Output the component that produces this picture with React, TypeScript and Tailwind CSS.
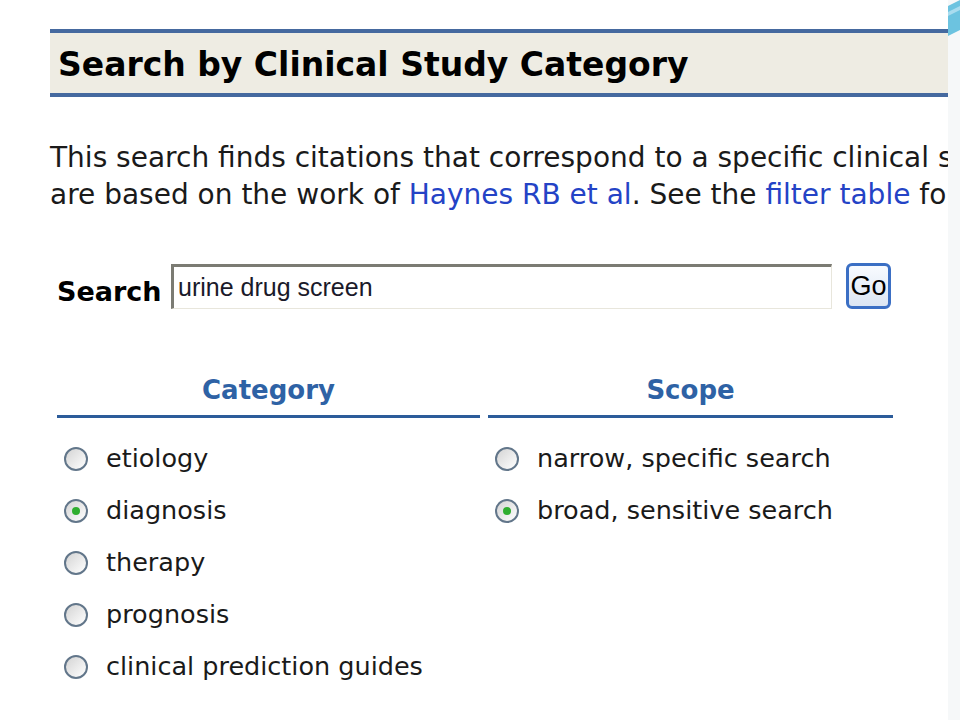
import React from "react";

const verdana = { fontFamily: '"DejaVu Sans", Verdana, sans-serif' };
const arial = { fontFamily: '"Liberation Sans", Arial, sans-serif' };

const Radio = ({ checked }: { checked?: boolean }) => (
  <span className="w-[24px] h-[24px] rounded-full border-2 border-[#62768a] bg-gradient-to-br from-[#d4d4d4] to-[#ffffff] flex items-center justify-center shrink-0">
    {checked && <span className="w-[8px] h-[8px] rounded-full bg-[#2fae2f]" />}
  </span>
);

const Option = ({ label, checked }: { label: string; checked?: boolean }) => (
  <div className="h-[52px] flex items-center gap-[18px] pl-[7px]">
    <Radio checked={checked} />
    <span className="text-[25.5px] text-[#1a1a1a]">{label}</span>
  </div>
);

const App = () => {
  const categories = ["etiology", "diagnosis", "therapy", "prognosis", "clinical prediction guides"];
  const scopes = ["narrow, specific search", "broad, sensitive search"];

  return (
    <div className="w-[960px] h-[720px] bg-white flex overflow-hidden" style={verdana}>
      <div className="w-[948px] overflow-hidden pl-[50px] pt-[29px]">
        {/* Header bar */}
        <div className="w-[920px] h-[68px] bg-[#eeece3] border-t-[4px] border-b-[4px] border-[#45699f] flex items-center pl-[8px] pt-[4px]">
          <h1 className="text-[33px] font-bold text-black whitespace-nowrap">Search by Clinical Study Category</h1>
        </div>

        {/* Intro text */}
        <div className="mt-[42px] w-[1000px] text-[28px] leading-[37px] text-[#1a1a1a] whitespace-nowrap">
          <p>This search finds citations that correspond to a specific clinical study category.</p>
          <p>
            are based on the work of <span className="text-[#2443c6]">Haynes RB et al</span>. See the{" "}
            <span className="text-[#2443c6]">filter table</span> for details.
          </p>
        </div>

        {/* Search row */}
        <div className="mt-[51px] flex items-start">
          <span className="pl-[7px] w-[121px] mt-[8px] text-[27px] font-bold text-black">Search</span>
          <div
            className="w-[661px] h-[45px] border-t-[3px] border-l-[3px] border-b border-r border-t-[#7b7b73] border-l-[#7b7b73] border-b-[#e8e6dc] border-r-[#e8e6dc] bg-white flex items-center pl-[4px] text-[25px] text-[#1a1a2a]"
            style={arial}
          >
            urine drug screen
          </div>
          <button
            className="ml-[14px] -mt-[1px] w-[45px] h-[46px] rounded-[6px] border-[3px] border-[#3b6fc4] bg-gradient-to-b from-[#f8fbff] to-[#dce6f3] text-[27px] text-black flex items-center justify-center"
            style={arial}
          >
            Go
          </button>
        </div>

        {/* Category / Scope */}
        <div className="mt-[62px] flex gap-[8px] pl-[7px]">
          <div className="w-[423px]">
            <div className="h-[43px] border-b-[3px] border-[#2c5c9a] text-center text-[26px] font-bold text-[#2e62a5] leading-[30px]">
              Category
            </div>
            <div className="pt-[15px]">
              {categories.map((c) => (
                <Option key={c} label={c} checked={c === "diagnosis"} />
              ))}
            </div>
          </div>
          <div className="w-[405px]">
            <div className="h-[43px] border-b-[3px] border-[#2c5c9a] text-center text-[26px] font-bold text-[#2e62a5] leading-[30px]">
              Scope
            </div>
            <div className="pt-[15px]">
              {scopes.map((s) => (
                <Option key={s} label={s} checked={s.startsWith("broad")} />
              ))}
            </div>
          </div>
        </div>
      </div>

      {/* Slide edge */}
      <div className="w-[12px] relative bg-[#f6f8f9]">
        <svg className="absolute top-0 left-0" width="12" height="40" viewBox="0 0 12 40">
          <path d="M0 6 L12 0 L12 30 L0 36 Z" fill="#6cc3e0" />
          <path d="M0 12 L12 6 L12 10 L0 16 Z" fill="#a9dcef" />
        </svg>
      </div>
    </div>
  );
};

export default App;
